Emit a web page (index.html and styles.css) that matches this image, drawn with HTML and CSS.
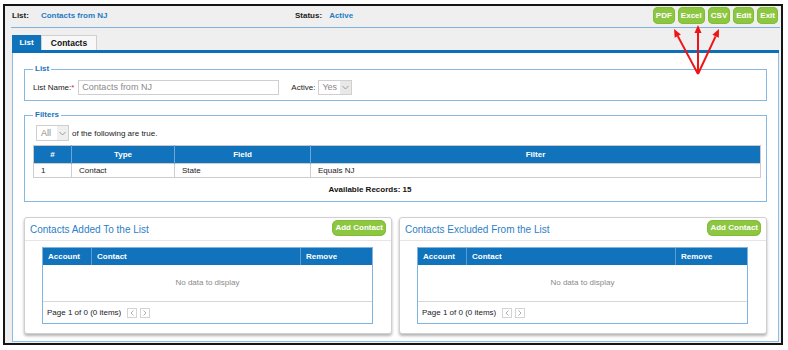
FILE: index.html
```html
<!DOCTYPE html>
<html lang="en">
<head>
  <meta charset="UTF-8">
  <title>List - Contacts from NJ</title>
  <link rel="stylesheet" href="styles.css">
</head>
<body>
  <div class="frame">
    <!-- Top bar -->
    <div class="topbar">
      <div class="meta meta-list"><b class="meta-label">List:</b><span class="meta-value">Contacts from NJ</span></div>
      <div class="meta"><b class="meta-label status-label">Status:</b><span class="meta-value">Active</span></div>
      <div class="actions">
        <a class="btn-green">PDF</a>
        <a class="btn-green">Excel</a>
        <a class="btn-green">CSV</a>
        <a class="btn-green">Edit</a>
        <a class="btn-green">Exit</a>
      </div>
    </div>

    <!-- Tabs -->
    <div class="tabs">
      <span class="tab tab-active">List</span>
      <span class="tab">Contacts</span>
    </div>

    <div class="tab-body">
      <fieldset class="group">
        <legend>List</legend>
        <div class="field-row">
          <label class="field-label">List Name:<span class="req">*</span></label>
          <div class="text-input">Contacts from NJ</div>
          <label class="field-label active-label">Active:</label>
          <div class="combo combo-yes">
            <span class="combo-text">Yes</span>
            <span class="combo-btn"><svg width="7" height="5" viewBox="0 0 7 5"><polyline points="0.5,1 3.5,4 6.5,1" fill="none" stroke="#9a9a9a" stroke-width="1"/></svg></span>
          </div>
        </div>
      </fieldset>

      <fieldset class="group filters">
        <legend>Filters</legend>
        <div class="match-row">
          <div class="combo combo-all">
            <span class="combo-text">All</span>
            <span class="combo-btn"><svg width="7" height="5" viewBox="0 0 7 5"><polyline points="0.5,1 3.5,4 6.5,1" fill="none" stroke="#9a9a9a" stroke-width="1"/></svg></span>
          </div>
          <span class="match-text">of the following are true.</span>
        </div>
        <table class="filter-table">
          <thead>
            <tr><th class="col-num">#</th><th class="col-type">Type</th><th class="col-field">Field</th><th>Filter</th></tr>
          </thead>
          <tbody>
            <tr><td>1</td><td>Contact</td><td>State</td><td>Equals NJ</td></tr>
          </tbody>
        </table>
        <div class="records">Available Records: 15</div>
      </fieldset>

      <div class="panels">
        <section class="panel">
          <div class="panel-head">
            <h3 class="panel-title">Contacts Added To the List</h3>
            <a class="btn-green btn-add">Add Contact</a>
          </div>
          <div class="grid">
            <div class="grid-head">
              <span class="gh-account">Account</span>
              <span class="gh-contact">Contact</span>
              <span class="gh-remove">Remove</span>
            </div>
            <div class="grid-empty">No data to display</div>
            <div class="pager">
              <span class="pager-info">Page 1 of 0 (0 items)</span>
              <span class="pg-btn"><svg width="4" height="6" viewBox="0 0 4 6"><polyline points="3.5,0.5 1,3 3.5,5.5" fill="none" stroke="#b0b0b0" stroke-width="1"/></svg></span>
              <span class="pg-btn"><svg width="4" height="6" viewBox="0 0 4 6"><polyline points="0.5,0.5 3,3 0.5,5.5" fill="none" stroke="#b0b0b0" stroke-width="1"/></svg></span>
            </div>
          </div>
        </section>
        <section class="panel">
          <div class="panel-head">
            <h3 class="panel-title">Contacts Excluded From the List</h3>
            <a class="btn-green btn-add">Add Contact</a>
          </div>
          <div class="grid">
            <div class="grid-head">
              <span class="gh-account">Account</span>
              <span class="gh-contact">Contact</span>
              <span class="gh-remove">Remove</span>
            </div>
            <div class="grid-empty">No data to display</div>
            <div class="pager">
              <span class="pager-info">Page 1 of 0 (0 items)</span>
              <span class="pg-btn"><svg width="4" height="6" viewBox="0 0 4 6"><polyline points="3.5,0.5 1,3 3.5,5.5" fill="none" stroke="#b0b0b0" stroke-width="1"/></svg></span>
              <span class="pg-btn"><svg width="4" height="6" viewBox="0 0 4 6"><polyline points="0.5,0.5 3,3 0.5,5.5" fill="none" stroke="#b0b0b0" stroke-width="1"/></svg></span>
            </div>
          </div>
        </section>
      </div>
    </div>
  </div>

  <!-- Red callout arrows pointing at the export buttons -->
  <svg class="callout" width="788" height="350" viewBox="0 0 788 350">
    <g stroke="#f01414" stroke-width="2" fill="none">
      <line x1="698" y1="74" x2="677.8" y2="36.1"/>
      <line x1="698" y1="74" x2="698" y2="33"/>
      <line x1="698" y1="74" x2="715.6" y2="36.3"/>
    </g>
    <g fill="#f01414">
      <polygon points="674,29 680.9,34.4 674.7,37.7"/>
      <polygon points="698,25 701.5,33 694.5,33"/>
      <polygon points="719,29 718.8,37.7 712.4,34.8"/>
    </g>
  </svg>
</body>
</html>
```

FILE: styles.css
```css
body {
  margin: 0;
  font-family: "Liberation Sans", Arial, sans-serif;
  font-size: 8px;
  color: #222;
  background: #fff;
  position: relative;
}

/* Outer frame */
.frame {
  box-sizing: border-box;
  height: 341px;
  margin: 4px 5px 5px 3px;
  border: 2px solid #151515;
  background: #efefef;
  padding: 0 1px 0 6px;
  display: flex;
  flex-direction: column;
}

/* Top bar */
.topbar {
  box-sizing: border-box;
  display: flex;
  align-items: center;
  height: 22px;
  padding: 1px 2px 3px 1px;
  border-bottom: 1px solid #7fb2dc;
}

.meta-list {
  width: 283px;
}

.meta-label {
  font-weight: bold;
  color: #222;
  margin-right: 12px;
}

.status-label {
  margin-right: 7px;
}

.meta-value {
  color: #1f7bc4;
  font-weight: bold;
}

.actions {
  margin-left: auto;
  display: flex;
  gap: 3px;
}

.btn-green {
  display: inline-block;
  height: 17px;
  line-height: 17px;
  padding: 0 3px;
  border-radius: 5px;
  background: #8dc641;
  color: #fff;
  font-weight: bold;
  text-align: center;
  box-shadow: inset 0 0 0 1px #83bd38;
}

/* Tabs */
.tabs {
  display: flex;
  margin: 7px 1px 0 1px;
  border-bottom: 3px solid #0d6fb8;
}

.tab {
  height: 15px;
  line-height: 15px;
  font-weight: bold;
}

.tab-active {
  width: 29px;
  text-align: center;
  background: #0f73bb;
  color: #fff;
}

.tab:not(.tab-active) {
  box-sizing: border-box;
  width: 56px;
  text-align: center;
  background: #f8f8f8;
  border: 1px solid #cfcfcf;
  border-bottom: 0;
  line-height: 14px;
  color: #111;
  font-size: 8.5px;
}

.tab-body {
  flex: 1;
  margin: 0 1px 1px 1px;
  background: #fff;
  border: 1px solid #8cbde4;
  border-top: 0;
  padding: 0 11px 0 11px;
}

/* Fieldsets */
.group {
  margin: 11px 0 0;
  padding: 6px 8px 5px 8px;
  border: 1px solid #86b9e2;
  min-width: 0;
}

.group legend {
  padding: 0 2px;
  line-height: 10px;
  color: #2173bb;
  font-weight: bold;
}

.field-row {
  display: flex;
  align-items: center;
  height: 15px;
}

.req {
  color: #e02020;
}

.text-input {
  box-sizing: border-box;
  width: 201px;
  height: 15px;
  margin-left: 4px;
  padding-left: 3px;
  border: 1px solid #cfcfcf;
  color: #8a8a8a;
  font-size: 9px;
  line-height: 13px;
}

.active-label {
  margin-left: 12px;
}

.combo {
  box-sizing: border-box;
  display: flex;
  border: 1px solid #cfcfcf;
  color: #8a8a8a;
  font-size: 9px;
}

.combo-yes {
  width: 34px;
  height: 15px;
  margin-left: 3px;
}

.combo-text {
  flex: 1;
  padding-left: 3px;
  line-height: 13px;
}

.combo-btn {
  width: 11px;
  display: flex;
  align-items: center;
  justify-content: center;
  background: #e8e8e8;
}

/* Filters */
.filters {
  margin-top: 9px;
  padding: 5px 5px 5px 8px;
}

.match-row {
  display: flex;
  align-items: center;
}

.combo-all {
  width: 33px;
  height: 16px;
  margin-left: 3px;
}

.combo-all .combo-text {
  line-height: 14px;
  padding-left: 4px;
}

.combo-all .combo-btn {
  background: #efefef;
}

.match-text {
  margin-left: 3px;
}

.filter-table {
  width: 100%;
  margin-top: 4px;
  border-collapse: collapse;
  border: 1px solid #c9c9c9;
}

.filter-table th {
  height: 17px;
  padding: 0;
  background: #1173bb;
  color: #fff;
  font-weight: bold;
  border-left: 1px solid #6aa6d8;
}

.filter-table th:first-child {
  border-left: 0;
}

.col-num { width: 37px; }
.col-type { width: 102px; }
.col-field { width: 135px; }

.filter-table td {
  height: 13px;
  padding: 0 7px;
  border: 1px solid #cdcdcd;
}

.records {
  margin-top: 6px;
  padding-right: 54px;
  line-height: 12px;
  text-align: center;
  font-weight: bold;
  color: #111;
}

/* Bottom panels */
.panels {
  display: flex;
  gap: 7px;
  margin-top: 15px;
}

.panel {
  flex: 1;
  box-sizing: border-box;
  height: 117px;
  background: #fff;
  border: 1px solid #d0d0d0;
  border-radius: 3px;
  box-shadow: 0 2px 3px rgba(0, 0, 0, 0.3);
}

.panel-head {
  display: flex;
  align-items: center;
  justify-content: space-between;
  height: 22px;
  padding: 0 5px;
  border-bottom: 1px solid #e6e6e6;
}

.panel-title {
  margin: 0;
  font-size: 10px;
  font-weight: normal;
  color: #2c80c8;
}

.btn-add {
  height: 16px;
  line-height: 16px;
  border-radius: 6px;
  margin-top: -2px;
}

.grid {
  margin: 6px 18px 0 17px;
  border: 1px solid #7eb4df;
}

.grid-head {
  display: flex;
  height: 17px;
  line-height: 17px;
  background: #1173bb;
  color: #fff;
  font-weight: bold;
}

.grid-head span {
  padding-left: 5px;
  box-sizing: border-box;
}

.gh-account { width: 48px; }
.gh-contact { flex: 1; border-left: 1px solid #5a9bd2; }
.gh-remove { width: 72px; border-left: 1px solid #5a9bd2; }

.grid-empty {
  height: 36px;
  line-height: 36px;
  text-align: center;
  color: #8a8a8a;
}

.pager {
  display: flex;
  align-items: center;
  height: 21px;
  padding-left: 4px;
  border-top: 1px solid #d7d7d7;
}

.pager-info {
  margin-right: 3px;
}

.pg-btn {
  box-sizing: border-box;
  width: 10px;
  height: 10px;
  margin-left: 3px;
  border: 1px solid #d4d4d4;
  display: flex;
  align-items: center;
  justify-content: center;
}

/* Callout overlay */
.callout {
  position: absolute;
  left: 0;
  top: 0;
  pointer-events: none;
}
```
